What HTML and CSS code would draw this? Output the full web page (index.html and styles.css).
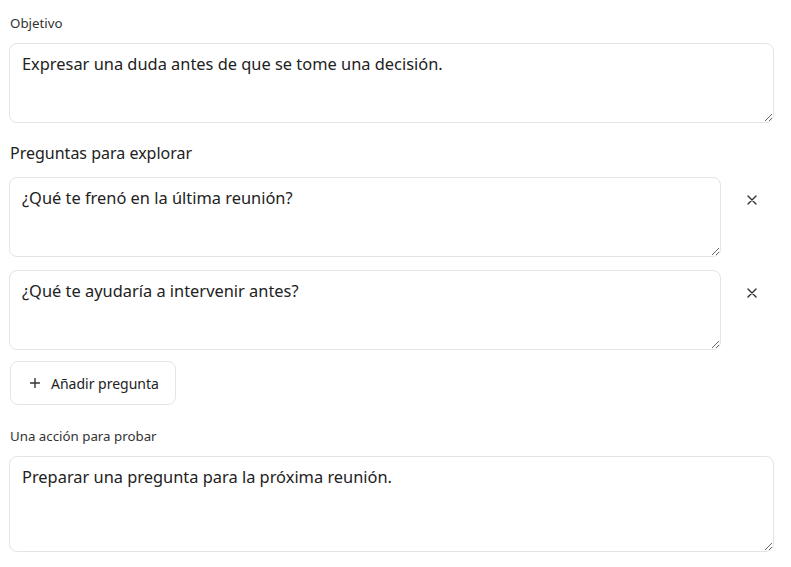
FILE: index.html
```html
<!DOCTYPE html>
<html lang="es">
<head>
<meta charset="utf-8">
<link rel="stylesheet" href="styles.css">
</head>
<body>
<main class="form">
  <label class="label-small" for="obj">Objetivo</label>
  <textarea id="obj" class="field field-wide">Expresar una duda antes de que se tome una decisión.</textarea>

  <h2 class="label-large">Preguntas para explorar</h2>
  <div class="questions">
    <div class="q-row">
      <textarea class="field field-q">¿Qué te frenó en la última reunión?</textarea>
      <button class="remove" aria-label="Eliminar"><svg width="10" height="10" viewBox="0 0 10 10"><path d="M1 1L9 9M9 1L1 9" stroke="#333" stroke-width="1.4" stroke-linecap="round"/></svg></button>
    </div>
    <div class="q-row">
      <textarea class="field field-q">¿Qué te ayudaría a intervenir antes?</textarea>
      <button class="remove" aria-label="Eliminar"><svg width="10" height="10" viewBox="0 0 10 10"><path d="M1 1L9 9M9 1L1 9" stroke="#333" stroke-width="1.4" stroke-linecap="round"/></svg></button>
    </div>
  </div>
  <button class="add"><svg class="plus" width="10" height="10" viewBox="0 0 10 10"><path d="M5 0.5V9.5M0.5 5H9.5" stroke="#333" stroke-width="1.4" stroke-linecap="round"/></svg>Añadir pregunta</button>

  <label class="label-small label-action" for="act">Una acción para probar</label>
  <textarea id="act" class="field field-wide field-tall">Preparar una pregunta para la próxima reunión.</textarea>
</main>
</body>
</html>
```

FILE: styles.css
```css
* { box-sizing: border-box; }
html, body { margin: 0; background: #fff; }
body {
  font-family: "Noto Sans", "Open Sans", sans-serif;
  color: #222;
}
.form {
  display: flex;
  flex-direction: column;
  align-items: flex-start;
  padding: 14px 17px 0 9px;
}
.label-small {
  display: block;
  font-size: 13.3px;
  line-height: 18px;
  color: #333;
  margin: 0 0 11px 1px;
}
.label-large {
  font-size: 16px;
  font-weight: 400;
  line-height: 22px;
  color: #222;
  margin: 19px 0 13px 1px;
}
.field {
  display: block;
  font-family: "Noto Sans", "Open Sans", sans-serif;
  font-size: 16.4px;
  line-height: 24px;
  color: #222;
  border: 1px solid #e4e4e4;
  border-radius: 8px;
  padding: 8px 12px;
  background: #fff;
  height: 80px;
  margin: 0;
  resize: vertical;
  outline: none;
}
.field-wide { width: 765px; }
.field-tall { height: 96px; }
.questions {
  display: flex;
  flex-direction: column;
  gap: 13px;
}
.q-row {
  display: flex;
  align-items: flex-start;
}
.field-q { width: 712px; }
.remove {
  border: 0;
  background: transparent;
  padding: 0;
  width: 20px;
  height: 20px;
  margin: 13px 0 0 21px;
  display: flex;
  align-items: center;
  justify-content: center;
  cursor: pointer;
}
.add {
  margin: 11px 0 0 1px;
  height: 44px;
  width: 166px;
  border: 1px solid #e4e4e4;
  border-radius: 8px;
  background: #fff;
  font-family: "Noto Sans", "Open Sans", sans-serif;
  font-size: 14px;
  color: #222;
  display: flex;
  align-items: center;
  justify-content: flex-start;
  gap: 11px;
  padding: 0 0 0 19px;
}
.plus { display: block; }
.label-action { margin: 22px 0 11px 1px; }
```
